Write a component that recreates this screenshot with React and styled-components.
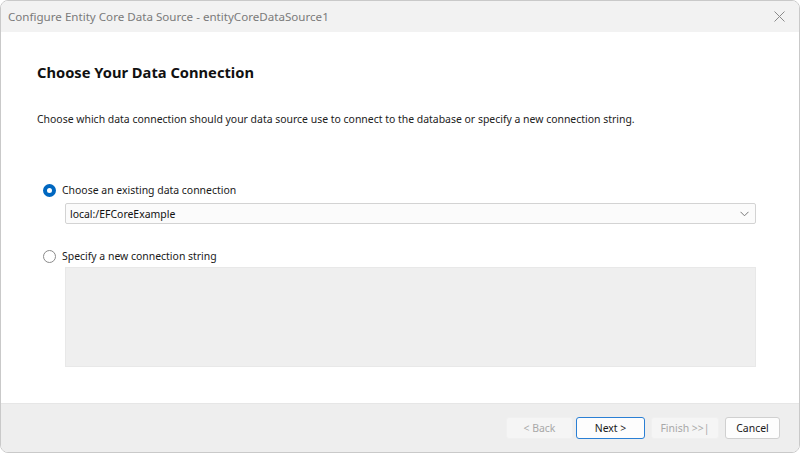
import React from 'react';
import styled, { createGlobalStyle } from 'styled-components';

const GlobalStyle = createGlobalStyle`
  html, body {
    margin: 0;
    padding: 0;
    background: #ffffff;
  }
  body {
    font-family: "Noto Sans", "Open Sans", sans-serif;
  }
`;

const Window = styled.div`
  position: relative;
  box-sizing: border-box;
  width: 800px;
  height: 453px;
  display: flex;
  flex-direction: column;
  border: 1px solid #c9c9c9;
  border-radius: 8px;
  overflow: hidden;
  background: #fff;

  &::before {
    content: '';
    position: absolute;
    top: -1px;
    left: 0;
    width: 398px;
    height: 1px;
    background: #8fbde0;
  }
`;

const TitleBar = styled.div`
  height: 31px;
  flex: none;
  display: flex;
  align-items: center;
  justify-content: space-between;
  padding: 0 14px 0 7px;
  background: #f2f2f2;
`;

const Title = styled.span`
  font-size: 11.6px;
  color: #7a7a7a;
`;

const CloseButton = styled.button`
  border: 0;
  background: none;
  padding: 0;
  display: flex;
  color: #8a8a8a;
`;

const Content = styled.div`
  flex: 1;
  display: flex;
  flex-direction: column;
  padding: 0 43px 0 36px;
`;

const Heading = styled.h1`
  margin: 29px 0 0;
  font-size: 14.7px;
  font-weight: 700;
  color: #111;
  line-height: 22px;
`;

const Description = styled.p`
  margin: 28px 0 0;
  font-size: 10.45px;
  color: #222;
  line-height: 16px;
`;

const Options = styled.div`
  display: flex;
  flex-direction: column;
  margin-top: 55px;
  padding-left: 6px;
`;

const OptionRow = styled.label`
  display: flex;
  align-items: center;
  gap: 6px;
  font-size: 10.45px;
  color: #1a1a1a;
  height: 16px;
  margin-top: ${p => p.$gap || 0}px;
`;

const Radio = styled.span`
  box-sizing: border-box;
  width: 13px;
  height: 13px;
  border-radius: 50%;
  flex: none;
  background: #fff;
  border: ${p => (p.$checked ? '4px solid #0067c0' : '1px solid #8a8a8a')};
`;

const Indent = styled.div`
  margin-left: 22px;
  margin-top: ${p => p.$gap || 0}px;
`;

const Select = styled.div`
  box-sizing: border-box;
  height: 21px;
  display: flex;
  align-items: center;
  justify-content: space-between;
  padding: 0 6px 0 4px;
  border: 1px solid #d3d3d3;
  border-radius: 2px;
  background: #fbfbfb;
  font-size: 10.45px;
  color: #111;
`;

const TextBox = styled.div`
  box-sizing: border-box;
  height: 100px;
  background: #efefef;
  border: 1px solid #e8e8e8;
`;

const Footer = styled.div`
  height: 49px;
  flex: none;
  display: flex;
  align-items: center;
  justify-content: flex-end;
  padding: 0 19px 0 0;
  background: #eeeeee;
  border-top: 1px solid #e6e6e6;
  box-sizing: border-box;
`;

const Button = styled.button`
  box-sizing: border-box;
  width: ${p => p.$w}px;
  height: 22px;
  margin-left: ${p => p.$ml || 0}px;
  border-radius: 3px;
  font-family: inherit;
  font-size: 10.45px;
  padding: 0;
  border: 1px solid ${p => (p.$primary ? '#2a7fd4' : p.disabled ? '#f0f0f0' : '#d0d0d0')};
  background: ${p => (p.disabled ? '#f5f5f5' : '#fdfdfd')};
  color: ${p => (p.disabled ? '#a8a8a8' : '#1a1a1a')};
`;

export default function App() {
  return (
    <>
      <GlobalStyle />
      <Window>
        <TitleBar>
          <Title>Configure Entity Core Data Source - entityCoreDataSource1</Title>
          <CloseButton aria-label="Close">
            <svg width="11" height="11" viewBox="0 0 11 11">
              <path d="M0.5 0.5 L10.5 10.5 M10.5 0.5 L0.5 10.5" stroke="currentColor" strokeWidth="1" fill="none" />
            </svg>
          </CloseButton>
        </TitleBar>
        <Content>
          <Heading>Choose Your Data Connection</Heading>
          <Description>
            Choose which data connection should your data source use to connect to the database or specify a new connection string.
          </Description>
          <Options>
            <OptionRow>
              <Radio $checked />
              Choose an existing data connection
            </OptionRow>
            <Indent $gap={5}>
              <Select>
                local:/EFCoreExample
                <svg width="9" height="6" viewBox="0 0 9 6">
                  <path d="M0.5 0.8 L4.5 4.8 L8.5 0.8" stroke="#777" strokeWidth="1" fill="none" />
                </svg>
              </Select>
            </Indent>
            <OptionRow $gap={24}>
              <Radio />
              Specify a new connection string
            </OptionRow>
            <Indent $gap={3}>
              <TextBox />
            </Indent>
          </Options>
        </Content>
        <Footer>
          <Button $w={67} disabled>&lt; Back</Button>
          <Button $w={69} $ml={3} $primary>Next &gt;</Button>
          <Button $w={68} $ml={6} disabled>Finish &gt;&gt;|</Button>
          <Button $w={55} $ml={6}>Cancel</Button>
        </Footer>
      </Window>
    </>
  );
}
